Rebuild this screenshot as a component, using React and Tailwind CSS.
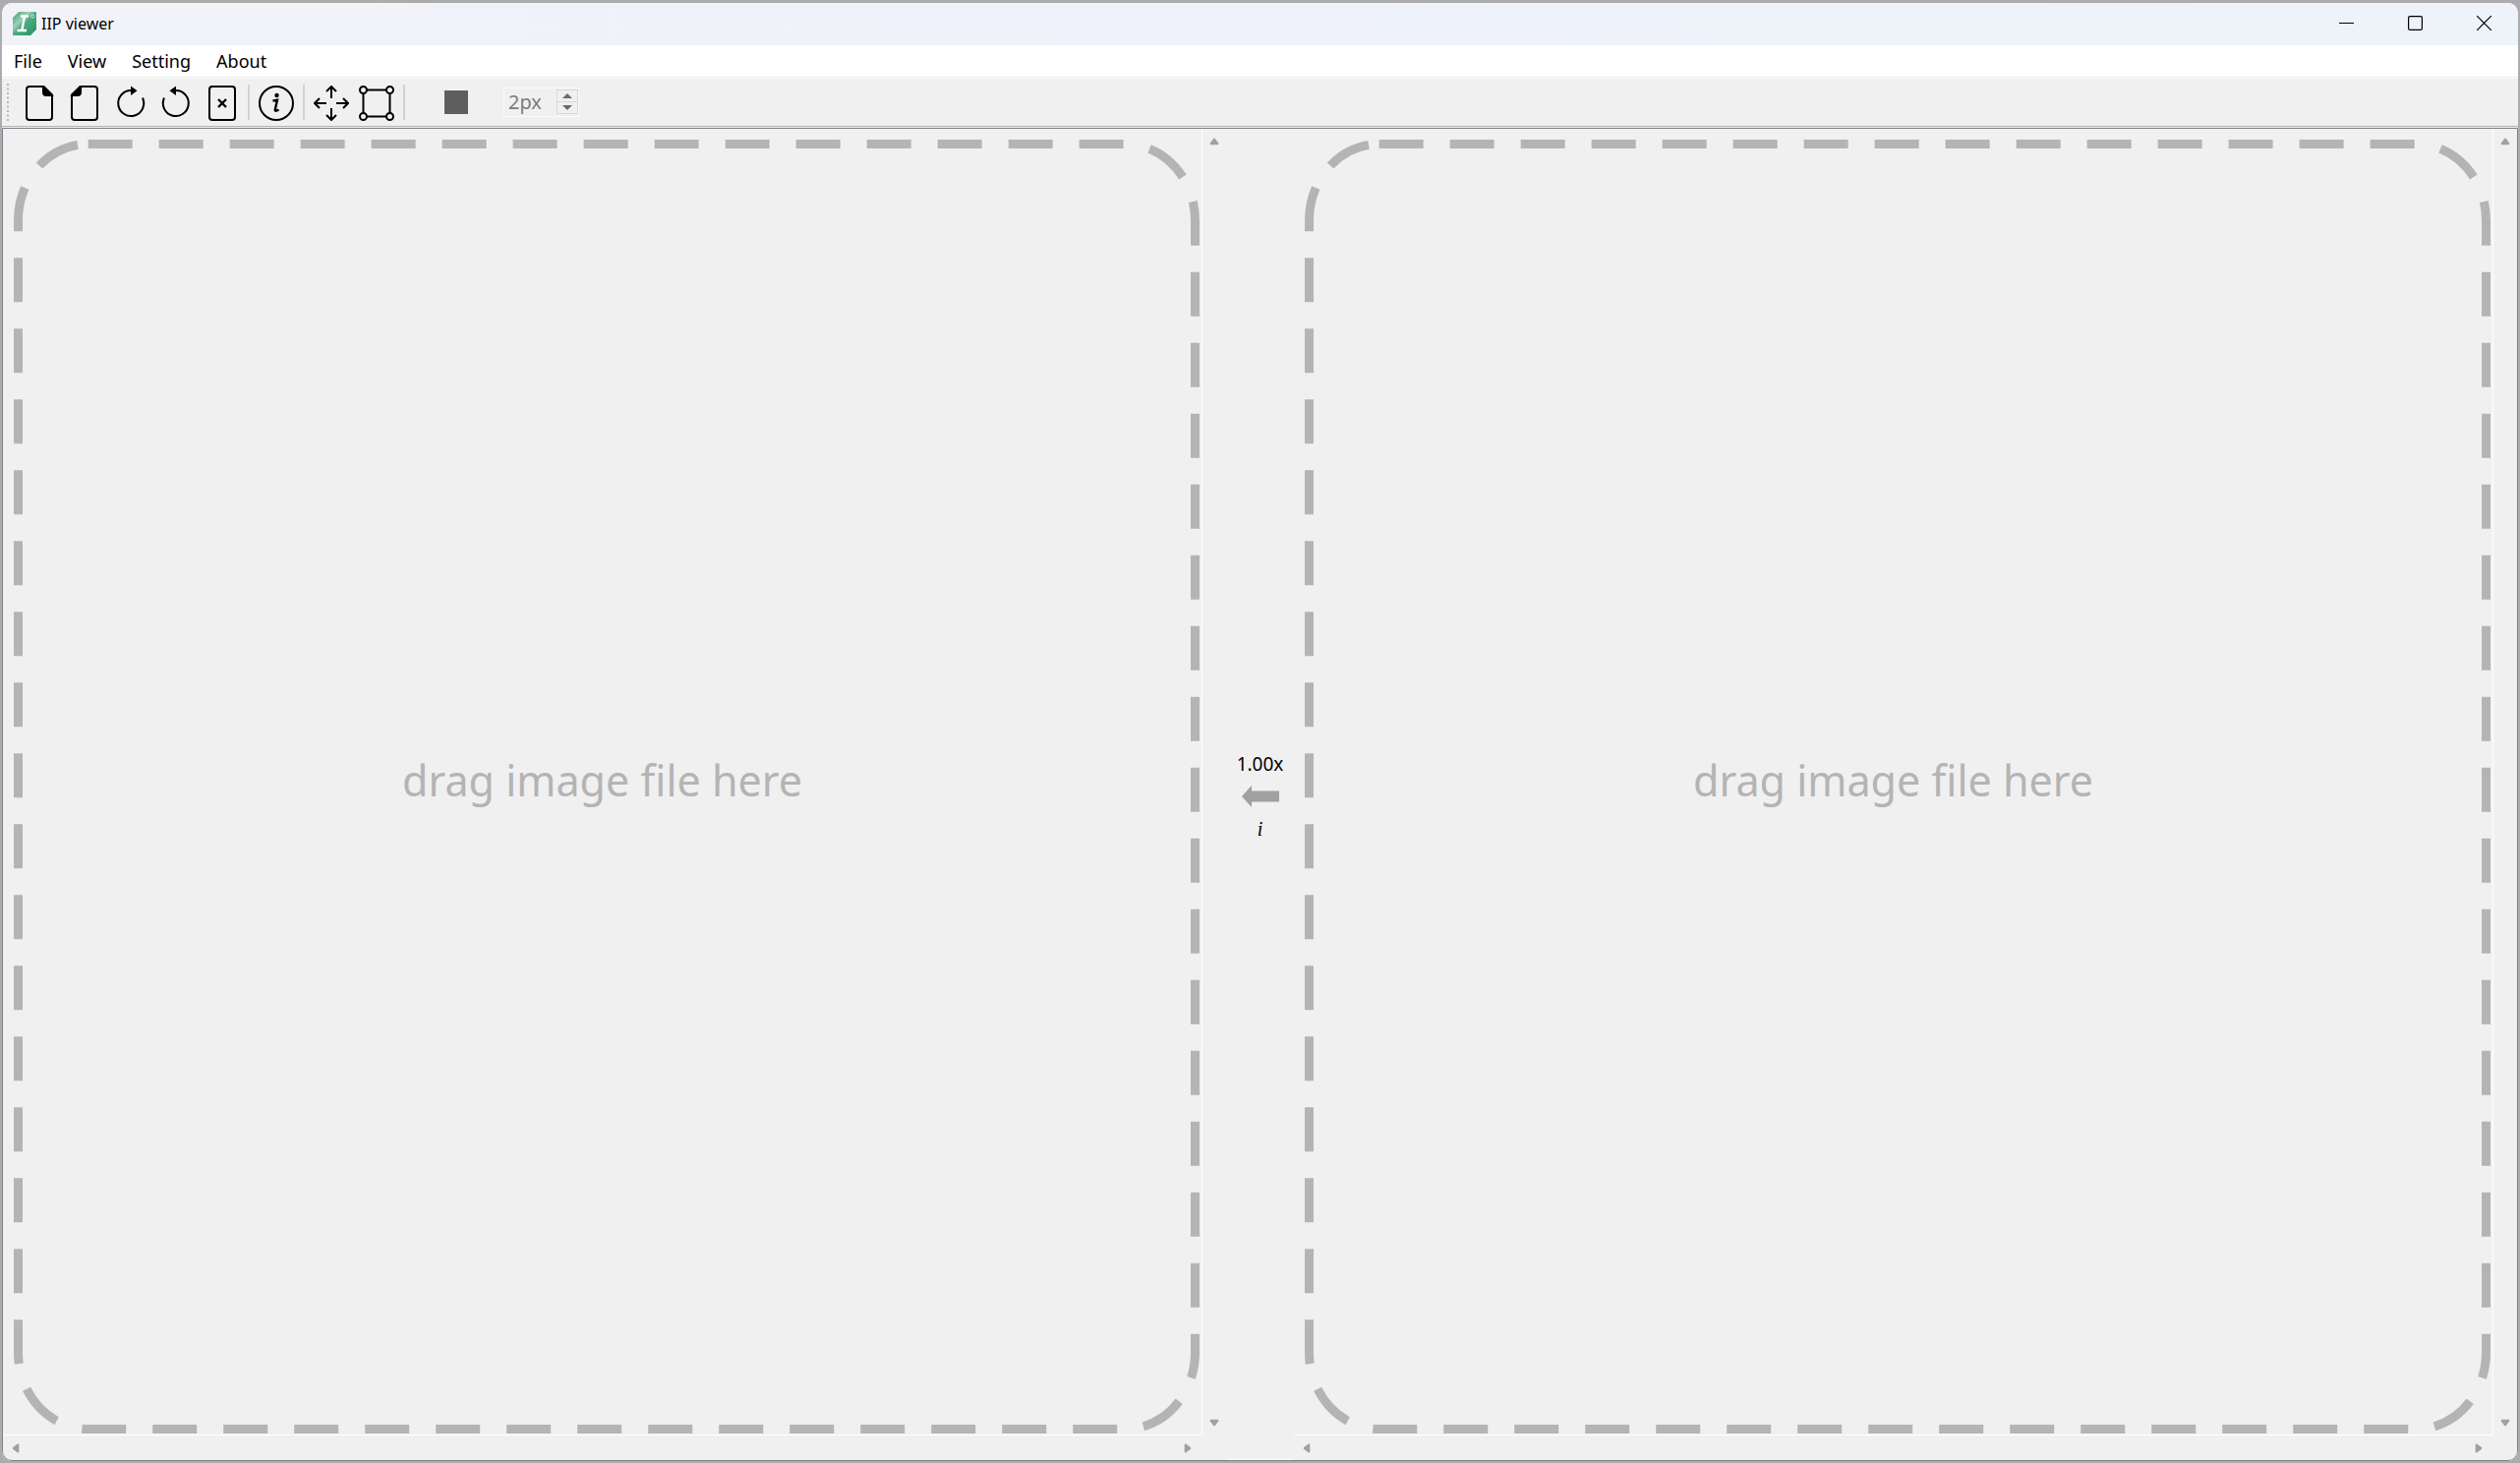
import React from "react";

function ToolButton({ label, children }) {
  return (
    <button type="button" aria-label={label} className="flex h-12 w-[46px] items-center justify-center pt-[2px]">
      <svg width="36" height="36" viewBox="0 0 36 36" fill="none" stroke="#000" strokeWidth="2" aria-hidden="true">
        {children}
      </svg>
    </button>
  );
}

function Separator() {
  return (
    <div className="flex w-[10px] justify-center">
      <div className="h-9 w-[2px] bg-[#d2d2d2]" />
    </div>
  );
}

function ScrollArrow({ label, turn }) {
  return (
    <button type="button" aria-label={label} className="flex size-6 items-center justify-center">
      <svg width="10" height="10" viewBox="0 0 10 10" aria-hidden="true">
        <path transform={`rotate(${turn} 5 5)`} d="M4 2.200 Q5 1 6 2.200 L9.200 6.600 Q9.800 8.300 8.500 8.300 H1.500 Q0.200 8.300 0.800 6.600 Z" fill="#a0a0a0" />
      </svg>
    </button>
  );
}

function ImageView() {
  return (
    <section className="grid min-w-0 flex-1 grid-cols-[minmax(0,1fr)_24px] grid-rows-[minmax(0,1fr)_25px]">
      <div className="relative border-r border-b border-white pt-[11px] pr-[2px] pb-px pl-[11px]">
        <svg className="block h-full w-full" aria-hidden="true">
          <rect
            x="4.5"
            y="4.5"
            rx="5.9%"
            ry="5.9%"
            className="h-[calc(100%-9px)] w-[calc(100%-9px)]"
            fill="none"
            stroke="#b4b4b4"
            strokeWidth="9"
            strokeDasharray="45 27"
          />
        </svg>
        <p className="absolute inset-0 flex items-center justify-center pb-[2px] text-[43px] text-[#b4b4b4]">drag image file here</p>
      </div>
      <div className="flex flex-col items-center justify-between pt-px pb-px">
        <ScrollArrow label="Scroll up" turn={0} />
        <ScrollArrow label="Scroll down" turn={180} />
      </div>
      <div className="flex items-center justify-between pr-[3px] pl-px">
        <ScrollArrow label="Scroll left" turn={-90} />
        <ScrollArrow label="Scroll right" turn={90} />
      </div>
      <div />
    </section>
  );
}

function Logo() {
  return (
    <svg width="24" height="24" viewBox="0 0 24 24" aria-hidden="true">
      <defs>
        <linearGradient id="logo" x1="0" y1="0" x2="1" y2="1">
          <stop offset="0" stopColor="#3f9c74" />
          <stop offset="0.35" stopColor="#9fd0b8" />
          <stop offset="0.5" stopColor="#4fa981" />
          <stop offset="1" stopColor="#1f9560" />
        </linearGradient>
      </defs>
      <path d="M6 0H24V18L18 24H0V6Z" fill="url(#logo)" />
      <path d="M8 4.500H16M4.500 19H14M12 4.500L9.300 19" stroke="#fff" strokeWidth="2.400" fill="none" />
      <circle cx="20" cy="4.500" r="1.600" fill="none" stroke="#c9e6d8" />
    </svg>
  );
}

export default function App() {
  return (
    <div className="flex h-screen flex-col overflow-hidden bg-[#acacac] px-[2px] pt-[3px] pb-[2px] font-['Noto_Sans','Open_Sans',sans-serif] text-black">
      <div className="flex min-h-0 flex-1 flex-col overflow-hidden rounded-[10px] bg-[#f0f0f0]">
        <header className="flex h-[43px] shrink-0 items-center justify-between bg-linear-to-r from-[#f2f3f8] via-[#eff2fb] to-[#edf3f8] pb-[2px] pl-[11px]">
          <div className="flex items-center gap-[5px]">
            <Logo />
            <h1 className="text-base">IIP viewer</h1>
          </div>
          <div className="flex h-full">
            <button type="button" aria-label="Minimize" className="flex w-[70px] items-center justify-center">
              <svg width="15" height="15" viewBox="0 0 15 15" aria-hidden="true"><path d="M0 7.500H15" stroke="#000" /></svg>
            </button>
            <button type="button" aria-label="Maximize" className="flex w-[70px] items-center justify-center">
              <svg width="15" height="15" viewBox="0 0 15 15" aria-hidden="true"><rect x=".6" y=".6" width="13.800" height="13.800" rx="1.500" fill="none" stroke="#000" strokeWidth="1.200" /></svg>
            </button>
            <button type="button" aria-label="Close" className="flex w-[70px] items-center justify-center">
              <svg width="15" height="15" viewBox="0 0 15 15" aria-hidden="true"><path d="M0 0L15 15M15 0L0 15" stroke="#000" strokeWidth="1.200" /></svg>
            </button>
          </div>
        </header>

        <nav className="flex h-8 shrink-0 items-center gap-[26px] bg-white px-3 text-lg">
          <button type="button">File</button>
          <button type="button">View</button>
          <button type="button">Setting</button>
          <button type="button">About</button>
        </nav>

        <div className="flex h-[51px] shrink-0 items-center border-t border-b border-t-[#ececec] border-b-[#b4b4b4] shadow-[inset_0_1px_0_#fff]">
          <svg width="16" height="38" viewBox="0 0 16 38" aria-hidden="true">
            <path d="M6 0V38" stroke="#b8b8b8" strokeWidth="2" strokeDasharray="2 2.500" />
          </svg>
          <ToolButton label="Open left image">
            <path d="M21.500 1H7Q4 1 4 4V32Q4 35 7 35H27Q30 35 30 32V9.500Z" />
            <path d="M21 1.500V7Q21 10 24 10H29.500Z" fill="#000" />
          </ToolButton>
          <ToolButton label="Open right image">
            <path d="M12.500 1H27Q30 1 30 4V32Q30 35 27 35H7Q4 35 4 32V9.500Z" />
            <path d="M13 1.500V7Q13 10 10 10H4.500Z" fill="#000" />
          </ToolButton>
          <ToolButton label="Rotate clockwise">
            <path d="M18 5A13 13 0 1 0 30 12.500" />
            <path d="M18 0.500V10L24.500 5.200Z" fill="#000" stroke="none" />
          </ToolButton>
          <ToolButton label="Rotate counterclockwise">
            <path d="M18 5A13 13 0 1 1 6 12.500" />
            <path d="M18 0.500V10L11.500 5.200Z" fill="#000" stroke="none" />
          </ToolButton>
          <ToolButton label="Close image">
            <rect x="6" y="1" width="26" height="34" rx="3" />
            <path d="M15 14L23 22M23 14L15 22" strokeWidth="2.400" />
          </ToolButton>
          <Separator />
          <ToolButton label="Image information">
            <circle cx="18" cy="18" r="17" />
            <circle cx="18.500" cy="10" r="2.200" fill="#000" stroke="none" />
            <path d="M14.500 15.500L19 14.800L16.800 24.500Q16.600 27 20.500 24.500" strokeWidth="2.400" />
          </ToolButton>
          <Separator />
          <ToolButton label="Move">
            <path d="M18 13V1M13 6L18 1L23 6M18 23V35M13 30L18 35L23 30M13 18H1M6 13L1 18L6 23M23 18H35M30 13L35 18L30 23" />
          </ToolButton>
          <ToolButton label="Select region">
            <path d="M8 4.500H28M8 31.500H28M4.500 8V28M31.500 8V28" />
            <circle cx="4.500" cy="4.500" r="3.500" />
            <circle cx="31.500" cy="4.500" r="3.500" />
            <circle cx="4.500" cy="31.500" r="3.500" />
            <circle cx="31.500" cy="31.500" r="3.500" />
          </ToolButton>
          <Separator />
          <button type="button" aria-label="Line color" className="ml-9 size-6 bg-[#5e5e5e]" />
          <div className="ml-9 flex h-[30px] w-[77px] items-center justify-between border border-[#fafafa] pl-1">
            <input type="text" aria-label="Line width" defaultValue="2px" className="w-10 bg-transparent text-xl text-[#7c7c7c]" />
            <div className="flex h-[25px] w-[22px] flex-col divide-y divide-[#d8d8d8] border border-[#d8d8d8]">
              <button type="button" aria-label="Increase line width" className="flex flex-1 items-center justify-center">
                <svg width="10" height="5" viewBox="0 0 10 5" aria-hidden="true"><path d="M0 5L5 0L10 5Z" fill="#6a6a6a" /></svg>
              </button>
              <button type="button" aria-label="Decrease line width" className="flex flex-1 items-center justify-center">
                <svg width="10" height="5" viewBox="0 0 10 5" aria-hidden="true"><path d="M0 0L5 5L10 0Z" fill="#6a6a6a" /></svg>
              </button>
            </div>
          </div>
        </div>

        <main className="mt-px flex min-h-0 flex-1 rounded-b-[10px] border border-[#80838c]">
          <ImageView />
          <div className="flex w-[69px] shrink-0 flex-col items-center justify-center gap-[10px] border-b border-white pt-1">
            <output className="text-[19px] leading-6">1.00x</output>
            <button type="button" aria-label="Copy view to the left">
              <svg width="38" height="22" viewBox="0 0 38 22" aria-hidden="true"><path d="M0 11L10 0V5.500H38V16.500H10V22Z" fill="#a0a0a0" /></svg>
            </button>
            <button type="button" aria-label="Image information" className="font-['Liberation_Serif',serif] text-xl leading-6 italic">i</button>
          </div>
          <ImageView />
        </main>
      </div>
    </div>
  );
}
